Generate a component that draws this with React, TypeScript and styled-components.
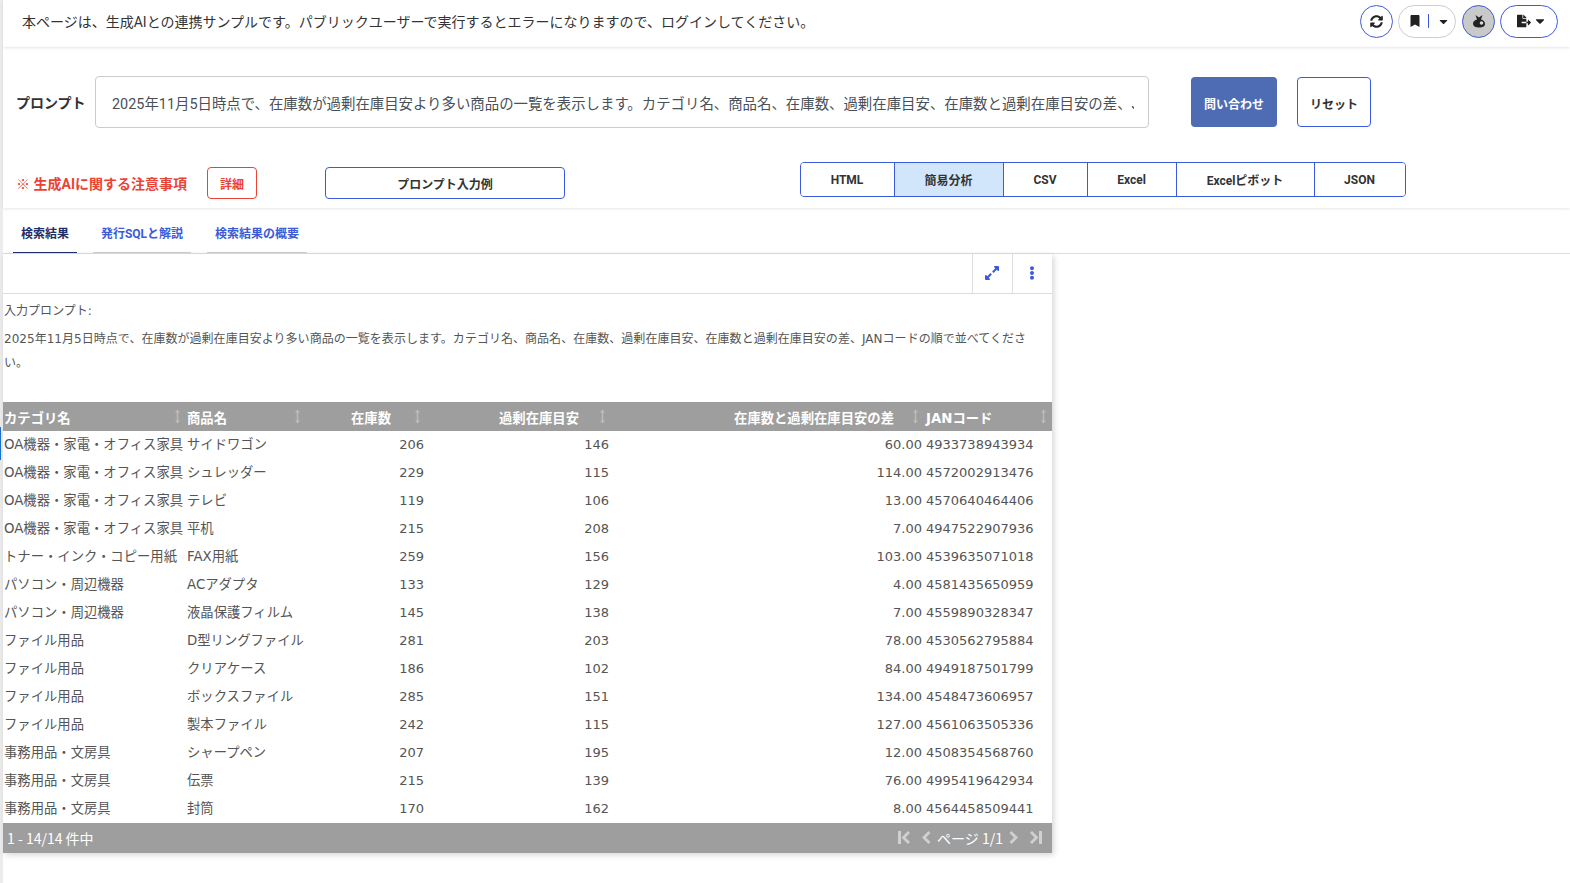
import React from "react";
import styled, { createGlobalStyle } from "styled-components";
import { FaSyncAlt, FaBookmark, FaCaretDown, FaFileExport, FaExpandAlt, FaEllipsisV } from "react-icons/fa";

const Global = createGlobalStyle`
  html, body { margin: 0; padding: 0; background: #fff; }
  body { font-family: Roboto, "Noto Sans CJK JP", sans-serif; color: #333; overflow: hidden; }
  * { box-sizing: border-box; }
`;

const Page = styled.div`
  position: relative; width: 1570px; height: 883px; padding-left: 3px; overflow: hidden;
  box-shadow: inset 3px 0 0 #ececec;
`;
const EdgeMark = styled.div`
  position: absolute; left: 0; top: 427px; width: 1px; height: 33px; background: #1a6fc9;
`;
const TopBar = styled.header`
  height: 47px; display: flex; align-items: center; justify-content: space-between;
  padding: 0 12px 5px 19px; box-shadow: 0 1px 3px rgba(0,0,0,.1);
`;
const Notice = styled.div` font-size: 14px; color: #333; padding-bottom: 1px; `;
const TopActions = styled.div` display: flex; align-items: center; gap: 5px; `;
const Circle = styled.button<{ $active?: boolean }>`
  width: 33px; height: 33px; border-radius: 50%; border: 1px solid #3b5bdb;
  background: ${p => (p.$active ? "#c9c9c9" : "#fff")};
  display: flex; align-items: center; justify-content: center; padding: 0; color: #222; font-size: 13px;
`;
const Pill = styled.button`
  width: 58px; height: 33px; border-radius: 17px; border: 1px solid #3b5bdb;
  background: #fff; display: flex; align-items: center; justify-content: center; gap: 2px; padding: 0 0 0 6px; color: #222; font-size: 14px;
`;
const BookmarkPill = styled(Pill)`
  border-color: #ccc; gap: 5px; padding-left: 5px; margin-right: 1px;
`;
const Sep = styled.span` width: 1px; height: 14px; background: #3b5bdb; margin: 0 3px 0 2px; `;
const AvatarIcon = styled.svg` width: 14px; height: 14px; `;

const Controls = styled.section`
  height: 161px; padding: 29px 0 0 13px; box-shadow: 0 1px 3px rgba(0,0,0,.1);
`;
const PromptRow = styled.div` display: flex; align-items: center; height: 52px; `;
const PromptLabel = styled.div` width: 79px; font-size: 14px; font-weight: 700; color: #333; `;
const PromptBox = styled.div`
  width: 1054px; height: 52px; border: 1px solid #ccc; border-radius: 4px; padding: 1px 14px 0 16px;
  display: flex; align-items: center; font-size: 14.42px; color: #495057; white-space: nowrap; overflow: hidden;
`;
const Clip = styled.span` overflow: hidden; display: block; width: 100%; `;
const Primary = styled.button`
  margin-left: 42px; width: 86px; height: 50px; border: 0; border-radius: 4px; background: #4e6cb3; color: #fff; padding: 2px 0 0;
  white-space: nowrap; font: 700 12px Roboto, "Noto Sans CJK JP", sans-serif;
`;
const Secondary = styled.button`
  margin-left: 20px; width: 74px; height: 50px; border: 1px solid #3b5bdb; border-radius: 4px; background: #fff; color: #333; padding: 2px 0 0;
  font: 700 12px Roboto, "Noto Sans CJK JP", sans-serif;
`;
const ActionRow = styled.div` display: flex; align-items: flex-start; margin-top: 39px; `;
const Warning = styled.div` width: 191px; height: 32px; line-height: 34px; font-size: 14px; font-weight: 700; color: #ea4335; `;
const Detail = styled.button`
  width: 50px; height: 32px; border: 1px solid #ea4335; border-radius: 4px; background: #fff; color: #ea4335;
  font: 700 12px Roboto, "Noto Sans CJK JP", sans-serif; padding: 0;
`;
const Example = styled.button`
  margin-left: 68px; width: 240px; height: 32px; border: 1px solid #3b5bdb; border-radius: 4px; background: #fff; color: #333;
  font: 700 12px Roboto, "Noto Sans CJK JP", sans-serif;
`;
const FormatGroup = styled.div`
  margin-left: 235px; margin-top: -5px; height: 35px; display: flex; border: 1px solid #3b5bdb; border-radius: 4px; overflow: hidden;
`;
const FormatButton = styled.button<{ $w: number; $on?: boolean }>`
  width: ${p => p.$w}px; height: 100%; border: 0; border-left: 1px solid #3b5bdb; padding: 0 1px 0 0;
  &:first-child { border-left: 0; }
  background: ${p => (p.$on ? "#d2e6fb" : "#fff")}; color: #333;
  font: 700 12px Roboto, "Noto Sans CJK JP", sans-serif;
`;

const Tabs = styled.nav`
  height: 46px; display: flex; align-items: flex-start; padding: 0 0 0 10px; gap: 16px; border-bottom: 1px solid #ddd;
`;
const Tab = styled.div<{ $w: number; $on?: boolean }>`
  width: ${p => p.$w}px; height: 45px; line-height: 52px; text-align: center; font-size: 12px; font-weight: 700;
  color: ${p => (p.$on ? "#1f2f6b" : "#3b5bdb")};
  border-bottom: 1px solid ${p => (p.$on ? "#1f2f6b" : "#ccc")};
`;

const Panel = styled.section`
  width: 1049px; box-shadow: 2px 2px 6px rgba(0,0,0,.16);
`;
const PanelBar = styled.div` height: 40px; display: flex; justify-content: flex-end; border-bottom: 1px solid #ddd; `;
const BarIcon = styled.div<{ $size: number }>`
  width: 40px; border-left: 1px solid #ddd; display: flex; align-items: center; justify-content: center; color: #3b5bdb;
  font-size: ${p => p.$size}px; padding: 0 1px 1px 0;
`;
const PromptEcho = styled.div`
  height: 108px; padding: 5px 18px 0 1px; font-size: 12px; letter-spacing: 0.033px; line-height: 24px; color: #555;
  font-family: "DejaVu Sans", "Noto Sans CJK JP", sans-serif;
`;
const EchoLine = styled.div` margin-bottom: 4px; `;
const Table = styled.table`
  width: 1049px; table-layout: fixed; border-collapse: collapse;
  font-family: "DejaVu Sans", "Noto Sans CJK JP", sans-serif; font-size: 13px; color: #555;
`;
const Th = styled.th<{ $right?: boolean; $pad: number }>`
  height: 29px; background: #9e9e9e; color: #fff; font-size: 13.33px; font-weight: 700; padding: 2px ${p => p.$pad}px 0 1px;
  text-align: ${p => (p.$right ? "right" : "left")}; position: relative; white-space: nowrap;
  &:last-child { padding-left: 2px; }
`;
const SortIcon = styled.svg`
  position: absolute; right: 5px; top: 7px; width: 7px; height: 15px;
`;
const NumCell = styled.td`
  height: 28px; padding: 0 2px 2px 1px; text-align: right; white-space: nowrap;
`;
const JanCell = styled.td`
  height: 28px; padding: 0 2px 2px 2px; text-align: left; white-space: nowrap;
`;
const TextCell = styled.td`
  height: 28px; padding: 0 1px 4px 1px; text-align: left; white-space: nowrap; font-size: 13.33px; overflow: hidden;
`;
const Footer = styled.div`
  height: 30px; background: #9e9e9e; color: #fff; display: flex; align-items: center; justify-content: space-between;
  padding: 0 10px 1px 4px; font-size: 14px; font-family: "Noto Sans CJK JP", sans-serif;
`;
const Pager = styled.div` display: flex; align-items: center; gap: 6px; `;
const OuterIcon = styled.svg<{ $side: "left" | "right" }>`
  width: 12px; height: 13px; margin-${p => p.$side}: 6px;
`;
const InnerIcon = styled.svg` width: 9px; height: 13px; `;

const rows: [string, string, number, number, string, string][] = [
  ["OA機器・家電・オフィス家具", "サイドワゴン", 206, 146, "60.00", "4933738943934"],
  ["OA機器・家電・オフィス家具", "シュレッダー", 229, 115, "114.00", "4572002913476"],
  ["OA機器・家電・オフィス家具", "テレビ", 119, 106, "13.00", "4570640464406"],
  ["OA機器・家電・オフィス家具", "平机", 215, 208, "7.00", "4947522907936"],
  ["トナー・インク・コピー用紙", "FAX用紙", 259, 156, "103.00", "4539635071018"],
  ["パソコン・周辺機器", "ACアダプタ", 133, 129, "4.00", "4581435650959"],
  ["パソコン・周辺機器", "液晶保護フィルム", 145, 138, "7.00", "4559890328347"],
  ["ファイル用品", "D型リングファイル", 281, 203, "78.00", "4530562795884"],
  ["ファイル用品", "クリアケース", 186, 102, "84.00", "4949187501799"],
  ["ファイル用品", "ボックスファイル", 285, 151, "134.00", "4548473606957"],
  ["ファイル用品", "製本ファイル", 242, 115, "127.00", "4561063505336"],
  ["事務用品・文房具", "シャープペン", 207, 195, "12.00", "4508354568760"],
  ["事務用品・文房具", "伝票", 215, 139, "76.00", "4995419642934"],
  ["事務用品・文房具", "封筒", 170, 162, "8.00", "4564458509441"],
];
const headers: [string, boolean, number, number][] = [
  ["カテゴリ名", false, 183, 28], ["商品名", false, 120, 28], ["在庫数", true, 120, 35],
  ["過剰在庫目安", true, 185, 32], ["在庫数と過剰在庫目安の差", true, 313, 30], ["JANコード", false, 128, 20],
];
const formats: [string, number, boolean?][] = [
  ["HTML", 93], ["簡易分析", 109, true], ["CSV", 84], ["Excel", 89], ["Excelピボット", 138], ["JSON", 91],
];
const promptText = "2025年11月5日時点で、在庫数が過剰在庫目安より多い商品の一覧を表示します。カテゴリ名、商品名、在庫数、過剰在庫目安、在庫数と過剰在庫目安の差、JANコードの順で並べてください。";

const Sort = () => (
  <SortIcon viewBox="0 0 7 15"><path d="M3.5 0.5 L6 3.5 H4.2 V11.5 H6 L3.5 14.5 L1 11.5 H2.8 V3.5 H1 Z" fill="#bdbdbd" /></SortIcon>
);

export default function App() {
  return (
    <Page>
      <Global />
      <EdgeMark />
      <TopBar>
        <Notice>本ページは、生成AIとの連携サンプルです。パブリックユーザーで実行するとエラーになりますので、ログインしてください。</Notice>
        <TopActions>
          <Circle><FaSyncAlt /></Circle>
          <BookmarkPill><FaBookmark size={12} /><Sep /><FaCaretDown size={13} /></BookmarkPill>
          <Circle $active>
            <AvatarIcon viewBox="0 0 14 14">
              <path d="M3.5 1 L7 3.5 L10.5 1 L9 5.5 C11 6 13 7.5 13 10 C13 12.5 10.5 13.5 7 13.5 C3 13.5 1 12 1 9.5 C1 7.5 3 6 5 5.5 Z" fill="#222" />
              <circle cx="9.5" cy="9" r="1.8" fill="#d8d8d8" />
            </AvatarIcon>
          </Circle>
          <Pill><FaFileExport /><FaCaretDown size={14} /></Pill>
        </TopActions>
      </TopBar>
      <Controls>
        <PromptRow>
          <PromptLabel>プロンプト</PromptLabel>
          <PromptBox><Clip>{promptText}</Clip></PromptBox>
          <Primary>問い合わせ</Primary>
          <Secondary>リセット</Secondary>
        </PromptRow>
        <ActionRow>
          <Warning>※ 生成AIに関する注意事項</Warning>
          <Detail>詳細</Detail>
          <Example>プロンプト入力例</Example>
          <FormatGroup>
            {formats.map(([n, w, on]) => <FormatButton key={n} $w={w} $on={on}>{n}</FormatButton>)}
          </FormatGroup>
        </ActionRow>
      </Controls>
      <Tabs>
        <Tab $w={64} $on>検索結果</Tab>
        <Tab $w={98}>発行SQLと解説</Tab>
        <Tab $w={100}>検索結果の概要</Tab>
      </Tabs>
      <Panel>
        <PanelBar>
          <BarIcon $size={16}><FaExpandAlt /></BarIcon>
          <BarIcon $size={14}><FaEllipsisV /></BarIcon>
        </PanelBar>
        <PromptEcho>
          <EchoLine>入力プロンプト:</EchoLine>
          <div>{promptText}</div>
        </PromptEcho>
        <Table>
          <colgroup>{headers.map(h => <col key={h[0]} style={{ width: h[2] }} />)}</colgroup>
          <thead>
            <tr>{headers.map(h => <Th key={h[0]} $right={h[1]} $pad={h[3]}>{h[0]}<Sort /></Th>)}</tr>
          </thead>
          <tbody>
            {rows.map(r => (
              <tr key={r[5]}>
                <TextCell>{r[0]}</TextCell>
                <TextCell>{r[1]}</TextCell>
                <NumCell>{r[2]}</NumCell>
                <NumCell>{r[3]}</NumCell>
                <NumCell>{r[4]}</NumCell>
                <JanCell>{r[5]}</JanCell>
              </tr>
            ))}
          </tbody>
        </Table>
        <Footer>
          <span>1 - 14/14 件中</span>
          <Pager>
            <OuterIcon $side="right" viewBox="0 0 12 13"><path d="M0 0h3v13H0zM10 0l2 2-4.5 4.5L12 11l-2 2-6.5-6.5z" fill="#d0d0d0" /></OuterIcon>
            <InnerIcon viewBox="0 0 9 13"><path d="M6.5 0l2 2L4 6.5 8.5 11l-2 2L0 6.5z" fill="#d0d0d0" /></InnerIcon>
            <span>ページ 1/1</span>
            <InnerIcon viewBox="0 0 9 13"><path d="M2.5 0l-2 2L5 6.5.5 11l2 2L9 6.5z" fill="#d0d0d0" /></InnerIcon>
            <OuterIcon $side="left" viewBox="0 0 12 13"><path d="M2 0L0 2l4.5 4.5L0 11l2 2 6.5-6.5zM9 0h3v13H9z" fill="#d0d0d0" /></OuterIcon>
          </Pager>
        </Footer>
      </Panel>
    </Page>
  );
}
